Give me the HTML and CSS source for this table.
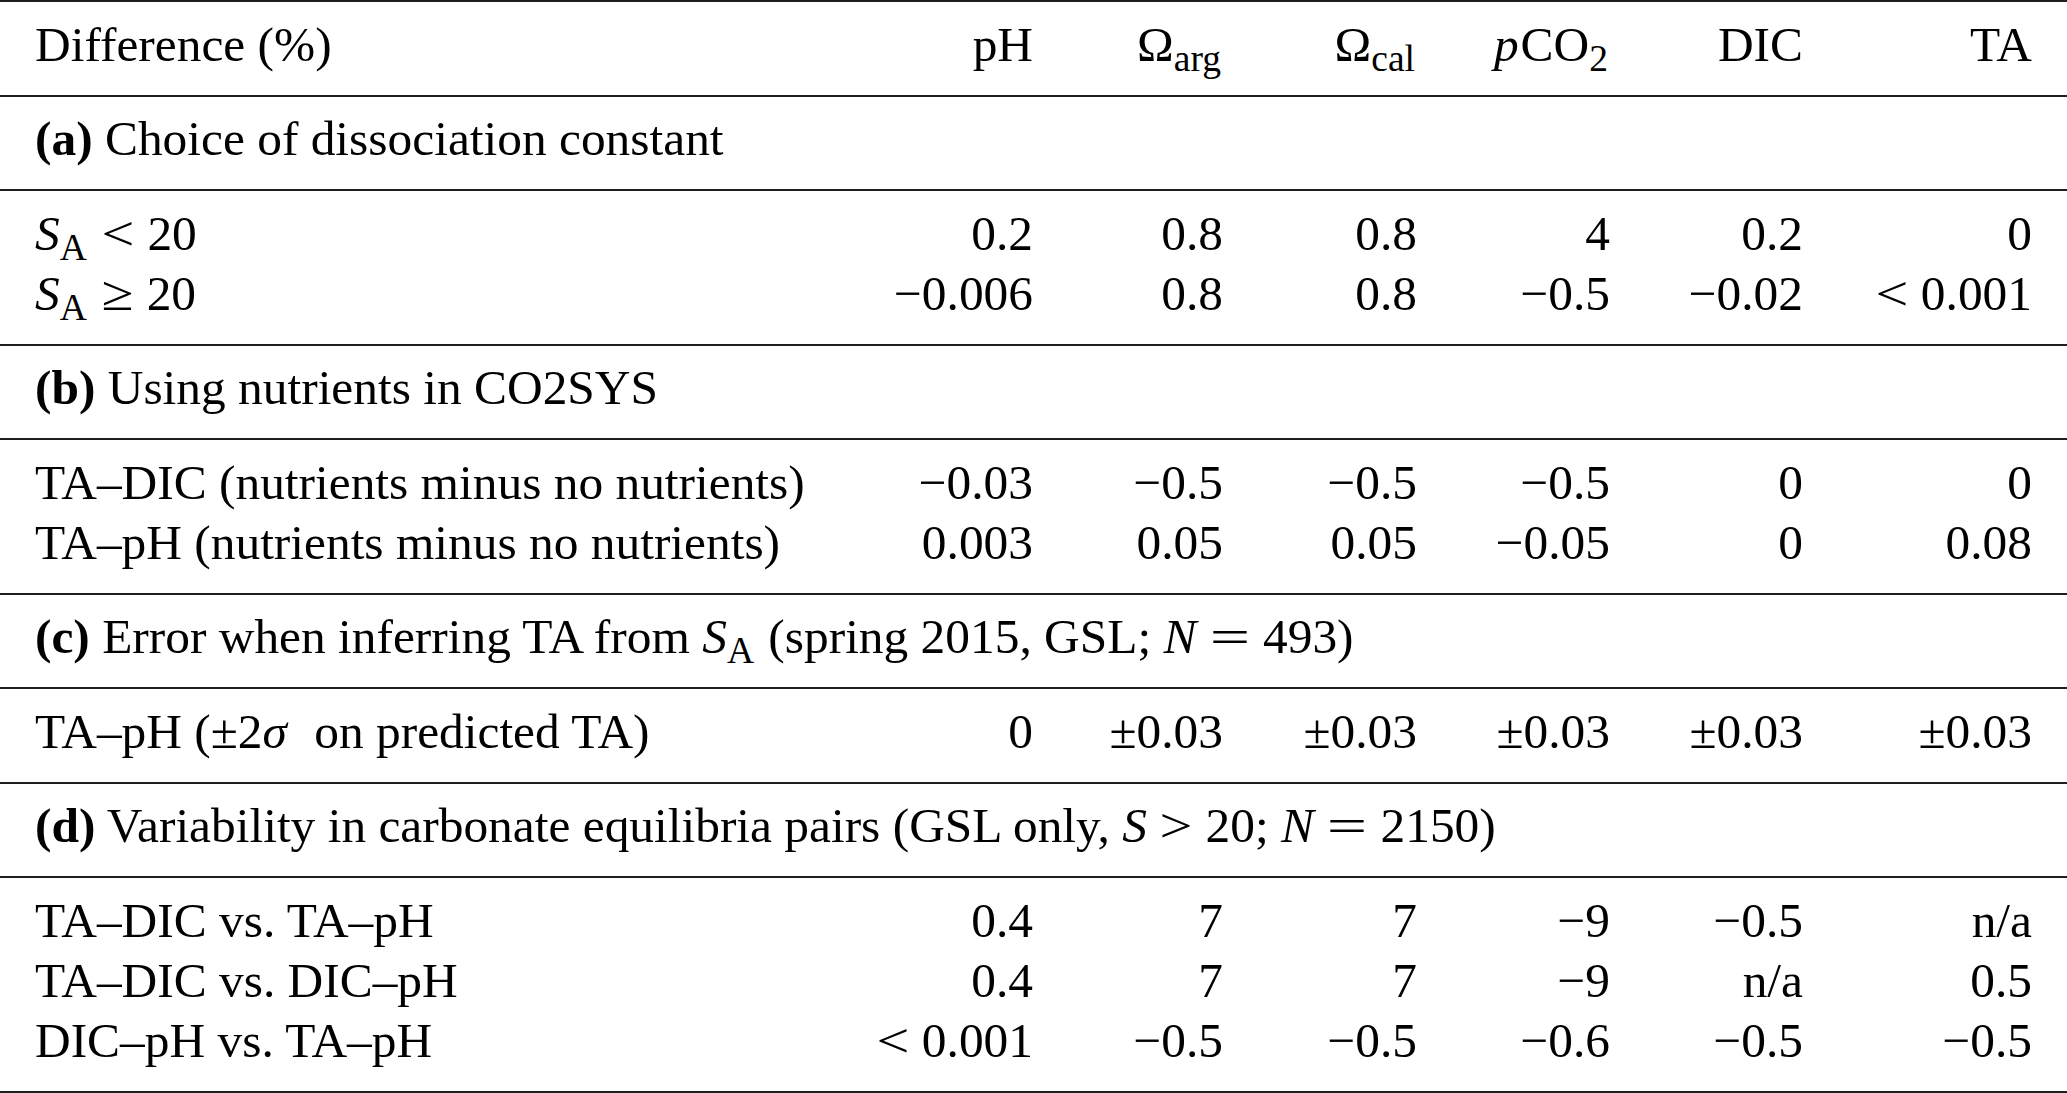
FILE: index.html
```html
<!DOCTYPE html>
<html lang="en">
<head>
<meta charset="utf-8">
<title>Difference table</title>
<link rel="stylesheet" href="styles.css">
</head>
<body>
<div class="table">
  <div class="block">
    <div class="row">
      <span class="label">Difference (%)</span>
      <span class="num">pH</span>
      <span class="num">Ω<sub>arg</sub></span>
      <span class="num">Ω<sub>cal</sub></span>
      <span class="num"><i class="mi">p</i>CO<sub>2</sub></span>
      <span class="num">DIC</span>
      <span class="num">TA</span>
    </div>
  </div>

  <div class="block">
    <div class="row"><span class="wide"><b>(a)</b> Choice of dissociation constant</span></div>
  </div>
  <div class="block">
    <div class="row">
      <span class="label"><i>S</i><sub>A</sub> <span class="rel">&lt;</span> 20</span>
      <span class="num">0.2</span><span class="num">0.8</span><span class="num">0.8</span><span class="num">4</span><span class="num">0.2</span><span class="num">0</span>
    </div>
    <div class="row">
      <span class="label"><i>S</i><sub>A</sub> <span class="rel">≥</span> 20</span>
      <span class="num">−0.006</span><span class="num">0.8</span><span class="num">0.8</span><span class="num">−0.5</span><span class="num">−0.02</span><span class="num"><span class="rel">&lt;</span> 0.001</span>
    </div>
  </div>

  <div class="block">
    <div class="row"><span class="wide"><b>(b)</b> Using nutrients in CO2SYS</span></div>
  </div>
  <div class="block">
    <div class="row">
      <span class="label">TA–DIC (nutrients minus no nutrients)</span>
      <span class="num">−0.03</span><span class="num">−0.5</span><span class="num">−0.5</span><span class="num">−0.5</span><span class="num">0</span><span class="num">0</span>
    </div>
    <div class="row">
      <span class="label">TA–pH (nutrients minus no nutrients)</span>
      <span class="num">0.003</span><span class="num">0.05</span><span class="num">0.05</span><span class="num">−0.05</span><span class="num">0</span><span class="num">0.08</span>
    </div>
  </div>

  <div class="block">
    <div class="row"><span class="wide"><b>(c)</b> Error when inferring TA from <i>S</i><sub>A</sub> (spring 2015, GSL; <i>N</i> <span class="rel eq">=</span> 493)</span></div>
  </div>
  <div class="block">
    <div class="row">
      <span class="label">TA–pH (±2<i class="sigma">σ</i> on predicted TA)</span>
      <span class="num">0</span><span class="num">±0.03</span><span class="num">±0.03</span><span class="num">±0.03</span><span class="num">±0.03</span><span class="num">±0.03</span>
    </div>
  </div>

  <div class="block">
    <div class="row"><span class="wide"><b>(d)</b> Variability in carbonate equilibria pairs (GSL only, <i>S</i> <span class="rel">&gt;</span> 20; <i>N</i> <span class="rel eq">=</span> 2150)</span></div>
  </div>
  <div class="block">
    <div class="row">
      <span class="label">TA–DIC vs. TA–pH</span>
      <span class="num">0.4</span><span class="num">7</span><span class="num">7</span><span class="num">−9</span><span class="num">−0.5</span><span class="num">n/a</span>
    </div>
    <div class="row">
      <span class="label">TA–DIC vs. DIC–pH</span>
      <span class="num">0.4</span><span class="num">7</span><span class="num">7</span><span class="num">−9</span><span class="num">n/a</span><span class="num">0.5</span>
    </div>
    <div class="row">
      <span class="label">DIC–pH vs. TA–pH</span>
      <span class="num"><span class="rel">&lt;</span> 0.001</span><span class="num">−0.5</span><span class="num">−0.5</span><span class="num">−0.6</span><span class="num">−0.5</span><span class="num">−0.5</span>
    </div>
  </div>
</div>
</body>
</html>
```

FILE: styles.css
```css
html, body {
  margin: 0;
  padding: 0;
  background: #ffffff;
}

body {
  font-family: "Liberation Serif", "Times New Roman", serif;
  font-size: 49.4px;
  color: #000000;
}

.table {
  border-bottom: 2px solid #1e1e1e;
}

.block {
  border-top: 2px solid #1e1e1e;
  padding: 12.5px 0 20px;
}

.row {
  display: grid;
  grid-template-columns: 808px 190px 190px 194px 193px 193px 229px;
  padding-left: 35px;
  height: 60px;
  line-height: 60px;
  white-space: nowrap;
}

.num {
  text-align: right;
}

.wide {
  grid-column: 1 / -1;
}

b {
  font-weight: bold;
}

i {
  font-style: italic;
}

.mi {
  margin-right: 2px;
}

sub {
  font-size: 76%;
  line-height: 0;
  vertical-align: -10px;
  margin-right: 2px;
}

.rel {
  display: inline-block;
  line-height: 1;
  transform: scaleX(1.18);
  margin: 0 3px;
}

.rel.eq {
  transform: scaleX(1.45);
  margin: 0 7px;
}

.sigma {
  margin-right: 15px;
}
```
